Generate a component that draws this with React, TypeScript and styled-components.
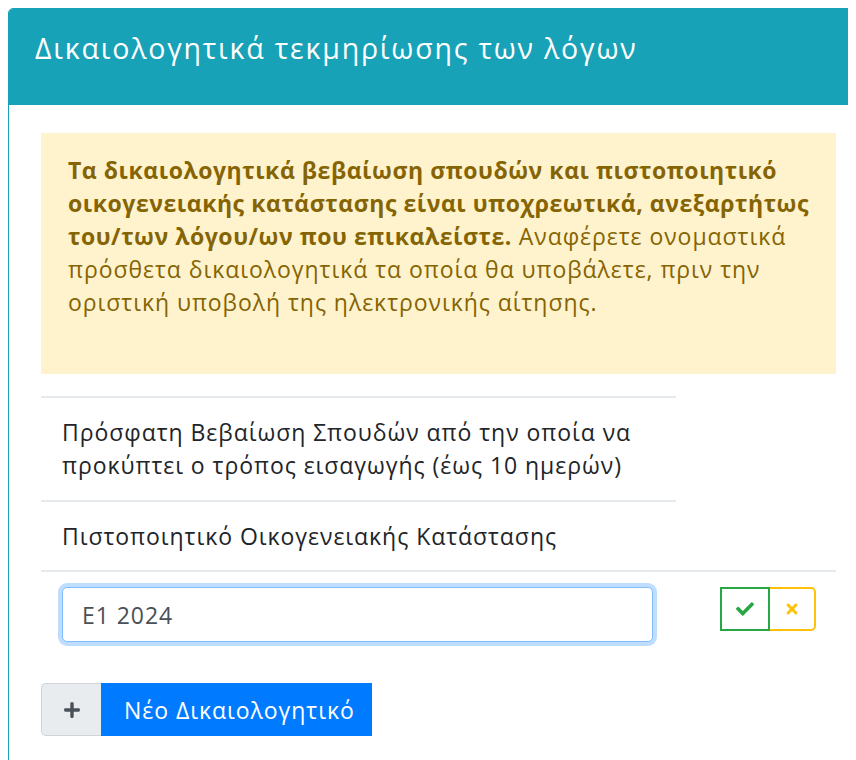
import React, { useState } from "react";
import styled, { createGlobalStyle } from "styled-components";
import { FaCheck, FaTimes, FaPlus } from "react-icons/fa";

const GlobalStyle = createGlobalStyle`
	body {
		margin: 8px;
		overflow: hidden;
		background: #fff;
		font-family: "Open Sans", "Noto Sans", "DejaVu Sans", sans-serif;
		font-size: 23px;
		letter-spacing: 0.95px;
		line-height: 33px;
		color: #212529;
	}

	b {
		letter-spacing: 0.55px;
	}
`;

const Card = styled.section`
	width: 861px;
	border: 1px solid #17a2b8;
	border-radius: 5px 5px 0 0;
	background: #fff;
	box-sizing: border-box;
`;

const CardHeader = styled.header`
	background: #17a2b8;
	color: #fff;
	padding: 22px 26px 40px;
	border-radius: 4px 4px 0 0;
`;

const Title = styled.h5`
	margin: 0;
	font-size: 28.5px;
	font-weight: 500;
	letter-spacing: 1.8px;
	line-height: 34px;
`;

const CardBody = styled.div`
	padding: 28px 32px 40px;
`;

const Alert = styled.div`
	background: #fff3cd;
	color: #856404;
	padding: 21px 26px 55px 27px;
	margin-bottom: 22px;
`;

const DocList = styled.ul`
	list-style: none;
	margin: 0;
	padding: 0;
	width: 635px;
`;

const DocItem = styled.li`
	border-top: 2px solid #e6e9ee;
	padding: 18px 21px 17px;
	&:first-child {
		padding-bottom: 18px;
	}
`;

const EntryRow = styled.div`
	display: flex;
	align-items: flex-start;
	border-top: 2px solid #e6e9ee;
	padding: 15px 0 0 21px;
	margin-bottom: 41px;
`;

const TextInput = styled.input`
	width: 591px;
	height: 55px;
	box-sizing: border-box;
	padding: 0 19px;
	font-family: inherit;
	font-size: 23px;
	letter-spacing: 0.95px;
	color: #495057;
	border: 1px solid #80bdff;
	border-radius: 5px;
	outline: none;
	box-shadow: 0 0 0 4px rgba(0, 123, 255, 0.25);
`;

const ActionGroup = styled.div`
	display: flex;
	margin-left: 67px;
`;

const ActionButton = styled.button<{ $tone: "ok" | "cancel" }>`
	display: flex;
	align-items: center;
	justify-content: center;
	width: ${(p) => (p.$tone === "ok" ? 50 : 46)}px;
	height: 44px;
	padding: 0;
	background: #fff;
	border: 2px solid ${(p) => (p.$tone === "ok" ? "#28a745" : "#ffc107")};
	border-left-width: ${(p) => (p.$tone === "ok" ? 2 : 0)}px;
	border-radius: ${(p) => (p.$tone === "ok" ? "0" : "0 5px 5px 0")};
	color: ${(p) => (p.$tone === "ok" ? "#28a745" : "#ffc107")};
	font-size: ${(p) => (p.$tone === "ok" ? 18 : 16)}px;
	cursor: pointer;
`;

const AddGroup = styled.div`
	display: inline-flex;
	height: 53px;
`;

const AddIcon = styled.span`
	display: flex;
	align-items: center;
	justify-content: center;
	width: 60px;
	box-sizing: border-box;
	background: #e9ecef;
	border: 1px solid #ced4da;
	border-right: 0;
	border-radius: 5px 0 0 5px;
	color: #495057;
	font-size: 18px;
`;

const AddButton = styled.button`
	background: #007bff;
	color: #fff;
	border: 0;
	padding: 0 17px 0 23px;
	font-family: inherit;
	font-size: 23px;
	letter-spacing: 0.95px;
	cursor: pointer;
`;

const App = () => {
	const [value, setValue] = useState("E1 2024");

	const docs = [
		"Πρόσφατη Βεβαίωση Σπουδών από την οποία να προκύπτει ο τρόπος εισαγωγής (έως 10 ημερών)",
		"Πιστοποιητικό Οικογενειακής Κατάστασης",
	];

	return (
		<>
			<GlobalStyle />
			<Card>
				<CardHeader>
					<Title>Δικαιολογητικά τεκμηρίωσης των λόγων</Title>
				</CardHeader>
				<CardBody>
					<Alert>
						<b>
							Τα δικαιολογητικά βεβαίωση σπουδών και πιστοποιητικό
							οικογενειακής κατάστασης είναι υποχρεωτικά, ανεξαρτήτως
							του/των λόγου/ων που επικαλείστε.
						</b>{" "}
						Αναφέρετε ονομαστικά πρόσθετα δικαιολογητικά τα οποία θα
						υποβάλετε, πριν την οριστική υποβολή της ηλεκτρονικής αίτησης.
					</Alert>
					<DocList>
						{docs.map((d) => (
							<DocItem key={d}>{d}</DocItem>
						))}
					</DocList>
					<EntryRow>
						<TextInput
							value={value}
							onChange={(e) => setValue(e.target.value)}
						/>
						<ActionGroup>
							<ActionButton $tone="ok">
								<FaCheck />
							</ActionButton>
							<ActionButton $tone="cancel">
								<FaTimes />
							</ActionButton>
						</ActionGroup>
					</EntryRow>
					<AddGroup>
						<AddIcon>
							<FaPlus />
						</AddIcon>
						<AddButton>Νέο Δικαιολογητικό</AddButton>
					</AddGroup>
				</CardBody>
			</Card>
		</>
	);
};

export default App;
